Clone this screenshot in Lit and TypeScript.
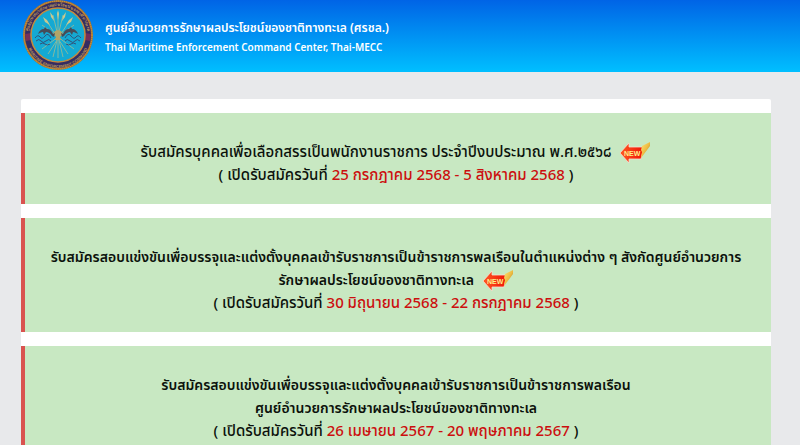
import { LitElement, html, css, svg } from "lit";
import { customElement, property } from "lit/decorators.js";
import { classMap } from "lit/directives/class-map.js";

interface Notice {
  lines: string[];
  period: string;
  isNew: boolean;
}

const notices: Notice[] = [
  {
    lines: ["รับสมัครบุคคลเพื่อเลือกสรรเป็นพนักงานราชการ ประจำปีงบประมาณ พ.ศ.๒๕๖๘"],
    period: "25 กรกฎาคม 2568 - 5 สิงหาคม 2568",
    isNew: true,
  },
  {
    lines: [
      "รับสมัครสอบแข่งขันเพื่อบรรจุและแต่งตั้งบุคคลเข้ารับราชการเป็นข้าราชการพลเรือนในตำแหน่งต่าง ๆ สังกัดศูนย์อำนวยการ",
      "รักษาผลประโยชน์ของชาติทางทะเล",
    ],
    period: "30 มิถุนายน 2568 - 22 กรกฎาคม 2568",
    isNew: true,
  },
  {
    lines: [
      "รับสมัครสอบแข่งขันเพื่อบรรจุและแต่งตั้งบุคคลเข้ารับราชการเป็นข้าราชการพลเรือน",
      "ศูนย์อำนวยการรักษาผลประโยชน์ของชาติทางทะเล",
    ],
    period: "26 เมษายน 2567 - 20 พฤษภาคม 2567",
    isNew: false,
  },
];

@customElement("mecc-seal")
export class MeccSeal extends LitElement {
  static styles = css`
    :host { display: block; width: 72px; height: 72px; flex: none; }
    svg { display: block; width: 100%; height: 100%; }
    .ring-text { font: 700 4px "Liberation Sans", "Noto Sans", sans-serif; fill: #b8935a; }
  `;

  render() {
    const dolphin = svg`
      <path d="M16 34c1-3 3-5 6-5l1-2 2 2c3 0 5 2 6 5l2-1-1 4-2-1c-2-3-4-4-6-4l-2 3-1-3c-2 0-3 1-5 2z" fill="#454c58"/>
      <path d="M13 38q3-4 5-1t5-1 6 2M14 41q3-3 5 0t5 0 5 0M18 44q3-2 5 0t5 0" fill="none" stroke="#31527a" stroke-width="1"/>`;
    return html`
      <svg viewBox="0 0 72 72" role="img" aria-label="Thai-MECC">
        <defs>
          <path id="top" d="M6 36a30 30 0 1 1 60 0" />
          <path id="bottom" d="M4 36a32 32 0 0 0 64 0" />
        </defs>
        <circle cx="36" cy="35" r="34" fill="#352c62" stroke="#a9752f" stroke-width="2" />
        <path d="M3 34l6-1v7l-5 1zM69 34l-6-1v7l5 1z" fill="#742f59" />
        <circle cx="36" cy="35" r="34" fill="none" stroke="#d69b43" stroke-width="1" stroke-dasharray="1 1" />
        <circle cx="36" cy="35" r="27" fill="#14a9d3" stroke="#c28b3f" stroke-width="1.5" />
        <g stroke="#84b9a0" stroke-width="1">
          <path d="M36 58V12M31 57l10-42M41 57L31 15M26 54l22-34M46 54L24 20M20 49l32-24M52 49L20 25" />
        </g>
        <g fill="#c9c98f">
          <path d="M36 10l1 4-1 6-1-6zM28 12l3 4 1 5-3-4zM44 12l-3 4-1 5 3-4zM21 17l4 3 3 5-5-3zM51 17l-4 3-3 5 5-3z" />
          <path d="M33 31l3-1 3 1 2 3-3 3 1 3h-6l1-3-3-3z" fill="#b3a568" />
        </g>
        ${dolphin}
        <g transform="translate(72 0) scale(-1 1)">${dolphin}</g>
        <text class="ring-text"><textPath href="#top" startOffset="50%" text-anchor="middle">ศูนย์อำนวยการรักษาผลประโยชน์ของชาติทางทะเล</textPath></text>
        <text class="ring-text"><textPath href="#bottom" startOffset="50%" text-anchor="middle">MARITIME ENFORCEMENT COMMAND</textPath></text>
      </svg>`;
  }
}

@customElement("new-badge")
export class NewBadge extends LitElement {
  static styles = css`
    :host { display: inline-block; width: 32px; height: 22px; vertical-align: middle; margin-left: 4px; }
    svg { display: block; width: 100%; height: 100%; }
    .word { font: 700 7px "Liberation Sans", sans-serif; fill: #fff08a; }
  `;

  render() {
    return html`
      <svg viewBox="0 0 32 22" role="img" aria-label="NEW">
        <defs>
          <linearGradient id="arrow" x1="0" x2="1">
            <stop offset="0" stop-color="#ff5a22" />
            <stop offset="1" stop-color="#f01408" />
          </linearGradient>
          <linearGradient id="fold" x1="0" y1="0" x2="1" y2="1">
            <stop offset="0" stop-color="#ffe477" />
            <stop offset=".5" stop-color="#edbd43" />
            <stop offset="1" stop-color="#a96c1c" />
          </linearGradient>
        </defs>
        <path d="M1 11L10 1v4h14v4l-2 8H10v4z" fill="url(#arrow)" stroke="#f6dfd2" stroke-width="0.8" />
        <path d="M23 4l8-4v4L22 16l1-6-1-2z" fill="url(#fold)" />
        <text class="word" x="5" y="13.5">NEW</text>
      </svg>`;
  }
}

@customElement("notice-card")
export class NoticeCard extends LitElement {
  @property({ attribute: false }) notice!: Notice;

  static styles = css`
    :host {
      display: block;
      min-width: 0;
      padding: 28px 4px 17px 0;
      border-left: 4px solid #d9534f;
      background: #c8e8c2;
      color: #0c120c;
      text-align: center;
      font-size: 15px;
      font-weight: 500;
      line-height: 23px;
    }
    a { color: inherit; text-decoration: none; }
    .line { display: block; height: 23px; white-space: nowrap; }
    .long { font-size: 14px; font-weight: 600; }
    .period { color: #cc0f0f; }
  `;

  render() {
    const { lines, period, isNew } = this.notice;
    const title = classMap({ line: true, long: lines.length > 1 });
    return html`
      <a href="#">
        ${lines.map((line, i) => html`<span class=${title}>${line}${isNew && i === lines.length - 1 ? html` <new-badge></new-badge>` : ""}</span>`)}
        <span class="line">( เปิดรับสมัครวันที่ <span class="period">${period}</span> )</span>
      </a>`;
  }
}

@customElement("app-root")
export class AppRoot extends LitElement {
  static styles = css`
    :host {
      display: block;
      height: 100vh;
      overflow: hidden;
      background: #e8e9eb;
      font-family: "Noto Sans Thai", "Noto Sans", sans-serif;
    }
    header {
      display: flex;
      align-items: center;
      gap: 11px;
      padding-left: 22px;
      background: linear-gradient(#0064e6, #00bfff);
      color: #fff;
    }
    h1, p { margin: 0; font-weight: 600; line-height: 20px; white-space: nowrap; }
    h1 { font-size: 12px; }
    p { font-size: 10px; }
    .names { padding-top: 4px; }
    main {
      display: grid;
      grid-template-columns: minmax(0, 1fr);
      gap: 14px;
      margin: 27px 29px 0 21px;
      padding: 14px 0;
      border-radius: 2px;
      background: #fff;
    }
  `;

  render() {
    return html`
      <header>
        <mecc-seal></mecc-seal>
        <div class="names">
          <h1>ศูนย์อำนวยการรักษาผลประโยชน์ของชาติทางทะเล (ศรชล.)</h1>
          <p>Thai Maritime Enforcement Command Center, Thai-MECC</p>
        </div>
      </header>
      <main>${notices.map((n) => html`<notice-card .notice=${n}></notice-card>`)}</main>`;
  }
}
